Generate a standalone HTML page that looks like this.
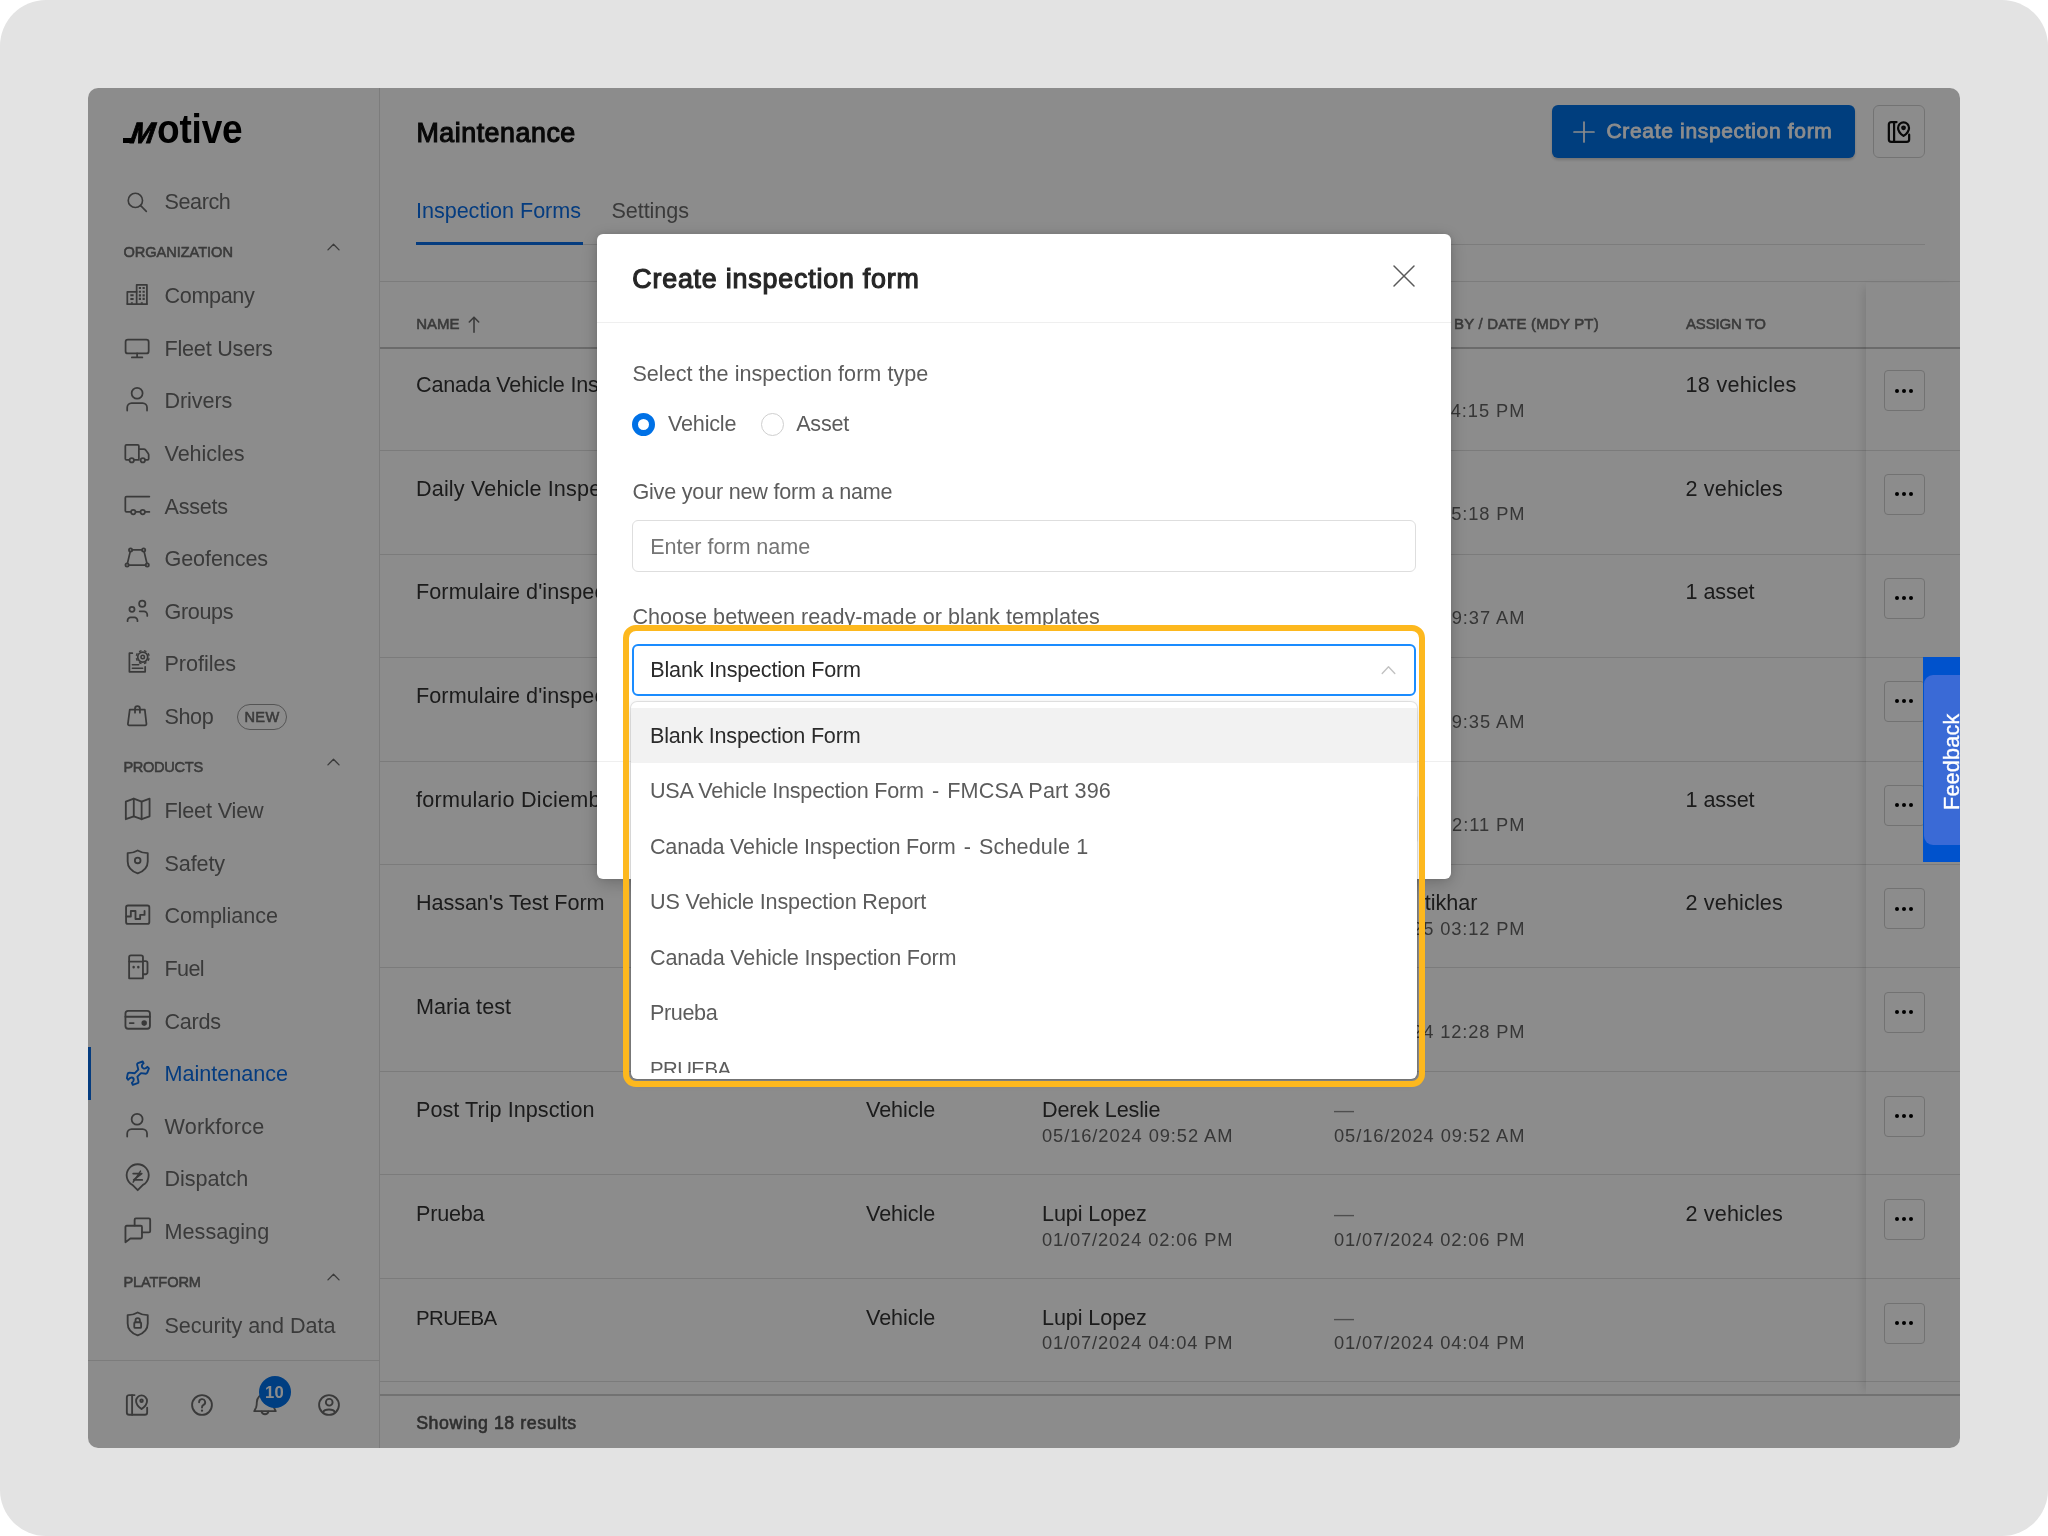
<!DOCTYPE html>
<html lang="en"><head><meta charset="utf-8"><title>Maintenance - Create inspection form</title>
<style>
html,body{margin:0;padding:0;background:#fff;}
body{width:2048px;height:1536px;position:relative;overflow:hidden;font-family:"Liberation Sans",sans-serif;}
.outer{position:absolute;left:0;top:0;width:2048px;height:1536px;background:#e3e3e3;border-radius:46px;}
.app{position:absolute;left:88px;top:88px;width:1872px;height:1360px;border-radius:10px;overflow:hidden;background:#fff;}
.g{position:absolute;left:-88px;top:-88px;width:2048px;height:1536px;will-change:transform;}
.t{position:absolute;line-height:1;white-space:pre;}
.ic{position:absolute;overflow:visible;}
.ln{position:absolute;background:#e6e6e6;}
.box{position:absolute;box-sizing:border-box;}
.dim{position:absolute;left:0;top:0;width:2048px;height:1536px;background:rgba(0,0,0,.45);}
.more{position:absolute;box-sizing:border-box;width:41px;height:41px;border:1.4px solid #cfcfcf;border-radius:4px;background:#fff;}
.more i{position:absolute;top:17.4px;width:4px;height:4px;border-radius:50%;background:#000;}
.opt{position:absolute;left:0;width:786px;height:54.6px;}
</style></head><body>
<div class="outer"></div>
<div class="app"><div class="g">

<div class="ln" style="left:379px;top:88px;width:1.3px;height:1360px;background:#e2e2e2"></div>
<div class="box" style="left:123px;top:138px;width:11px;height:4.6px;background:#000"></div>
<span class="t" style="left:127.5px;top:118.0px;font-size:29.5px;font-weight:700;color:#000;-webkit-text-stroke:0.9px #000;transform:skewX(-19deg) scaleX(0.97);transform-origin:0 84.65%">M</span>
<span class="t" style="left:157.2px;top:109.0px;font-size:40px;font-weight:700;color:#000;letter-spacing:-0.2px;transform:scaleX(0.925);transform-origin:0 84.65%">otive</span>
<svg class="ic" style="left:124.3px;top:188.5px;" width="26" height="26" viewBox="0 0 24 24" fill="none" stroke="#6b6b6b" stroke-width="1.5" stroke-linecap="round" stroke-linejoin="round"><circle cx="10.5" cy="10.5" r="6.600"/><path d="M15.400 15.400L20.600 20.600"/></svg>
<span class="t" style="left:164.5px;top:191px;font-size:21.6px;font-weight:400;color:#6b6b6b;letter-spacing:-0.42px;">Search</span>
<span class="t" style="left:123.4px;top:245px;font-size:14.6px;font-weight:400;color:#6b6b6b;letter-spacing:-0.04px;-webkit-text-stroke:0.55px #6b6b6b;">ORGANIZATION</span>
<svg class="ic" style="left:324.0px;top:238.2px;" width="19" height="19" viewBox="0 0 24 24" fill="none" stroke="#6b6b6b" stroke-width="1.7" stroke-linecap="round" stroke-linejoin="round"><path d="M5 15l7-7 7 7"/></svg>
<svg class="ic" style="left:123.3px;top:280.9px;" width="28" height="28" viewBox="0 0 24 24" fill="none" stroke="#6b6b6b" stroke-width="1.5" stroke-linecap="round" stroke-linejoin="round"><path d="M11.700 19.800V3.300h8.800v16.500"/><path d="M11.700 9.300H3.700v10.500"/><path d="M3.700 19.800h16.800"/><path d="M14.500 6v.01M17.700 6v.01M14.500 9.200v.01M17.700 9.200v.01M14.500 12.300v.01M17.700 12.300v.01M14.500 15.400v.01M17.700 15.400v.01" stroke-width="1.900" stroke-linecap="square"/><path d="M6.300 12.300h2.800M6.300 15.400h2.800" stroke-width="1.700" stroke-linecap="butt"/><path d="M7.600 19.500v-1.300M16.100 19.500v-1.300" stroke-width="1.700" stroke-linecap="butt"/></svg>
<span class="t" style="left:164.5px;top:285px;font-size:21.6px;font-weight:400;color:#6b6b6b;letter-spacing:-0.35px;">Company</span>
<svg class="ic" style="left:123.3px;top:333.5px;" width="28" height="28" viewBox="0 0 24 24" fill="none" stroke="#6b6b6b" stroke-width="1.5" stroke-linecap="round" stroke-linejoin="round"><rect x="2.200" y="4.900" width="19.800" height="11.800" rx="2"/><path d="M12.100 16.700v3.300M7.600 20.100h9"/></svg>
<span class="t" style="left:164.5px;top:338px;font-size:21.6px;font-weight:400;color:#6b6b6b;letter-spacing:-0.22px;">Fleet Users</span>
<svg class="ic" style="left:123.3px;top:386.2px;" width="28" height="28" viewBox="0 0 24 24" fill="none" stroke="#6b6b6b" stroke-width="1.5" stroke-linecap="round" stroke-linejoin="round"><circle cx="12.100" cy="6.200" r="4.700"/><path d="M3.600 21.100V18.400a3.800 3.800 0 0 1 3.800-3.800h9.400a3.800 3.800 0 0 1 3.800 3.800v2.700"/></svg>
<span class="t" style="left:164.5px;top:390px;font-size:21.6px;font-weight:400;color:#6b6b6b;letter-spacing:-0.10px;">Drivers</span>
<svg class="ic" style="left:123.3px;top:438.8px;" width="28" height="28" viewBox="0 0 24 24" fill="none" stroke="#6b6b6b" stroke-width="1.5" stroke-linecap="round" stroke-linejoin="round"><path d="M5.300 17.900H3a1 1 0 0 1-1-1V6a1 1 0 0 1 1-1h9.600a1 1 0 0 1 1 1v11.900H9.700"/><path d="M13.600 8.600h4.200a2 2 0 0 1 1.600.8l2.200 3a2 2 0 0 1 .4 1.200v3.300a1 1 0 0 1-1 1h-1.800"/><circle cx="7.500" cy="18.200" r="1.900"/><circle cx="17" cy="18.200" r="1.900"/></svg>
<span class="t" style="left:164.5px;top:443px;font-size:21.6px;font-weight:400;color:#6b6b6b;letter-spacing:-0.05px;">Vehicles</span>
<svg class="ic" style="left:123.3px;top:491.4px;" width="28" height="28" viewBox="0 0 24 24" fill="none" stroke="#6b6b6b" stroke-width="1.5" stroke-linecap="round" stroke-linejoin="round"><path d="M22.600 4.800H3a1 1 0 0 0-1 1v11.100a1 1 0 0 0 1 1h3.700"/><path d="M10.900 17.900h3.900M19 17.900h3.600"/><circle cx="8.800" cy="18.100" r="1.900"/><circle cx="16.900" cy="18.100" r="1.900"/></svg>
<span class="t" style="left:164.5px;top:496px;font-size:21.6px;font-weight:400;color:#6b6b6b;letter-spacing:-0.27px;">Assets</span>
<svg class="ic" style="left:123.3px;top:544.1px;" width="28" height="28" viewBox="0 0 24 24" fill="none" stroke="#6b6b6b" stroke-width="1.5" stroke-linecap="round" stroke-linejoin="round"><path d="M7.900 5.100h8.400M18.100 6.500l2.400 10.100M19.400 18H4.900M3.800 16.600L6.200 6.500"/><circle cx="6.500" cy="5.100" r="1.400"/><circle cx="17.700" cy="5.100" r="1.400"/><circle cx="20.800" cy="18" r="1.400"/><circle cx="3.500" cy="18" r="1.400"/></svg>
<span class="t" style="left:164.5px;top:548px;font-size:21.6px;font-weight:400;color:#6b6b6b;letter-spacing:-0.10px;">Geofences</span>
<svg class="ic" style="left:123.3px;top:596.7px;" width="28" height="28" viewBox="0 0 24 24" fill="none" stroke="#6b6b6b" stroke-width="1.5" stroke-linecap="round" stroke-linejoin="round"><circle cx="7.700" cy="10.600" r="2.200"/><path d="M3.900 20.700v-.6a2.600 2.600 0 0 1 2.600-2.600h3.300a2.600 2.600 0 0 1 2.600 2.600v.6"/><circle cx="16.500" cy="5.800" r="2.700"/><path d="M14.300 12.300h3.600a2.900 2.900 0 0 1 2.900 2.900v1"/></svg>
<span class="t" style="left:164.5px;top:601px;font-size:21.6px;font-weight:400;color:#6b6b6b;letter-spacing:-0.35px;">Groups</span>
<svg class="ic" style="left:123.3px;top:649.3px;" width="28" height="28" viewBox="0 0 24 24" fill="none" stroke="#6b6b6b" stroke-width="1.5" stroke-linecap="round" stroke-linejoin="round"><path d="M8 3.600H5.500V19.500H19V15.300"/><path d="M8 13.500h5.500M8 16.400h8.900" stroke-width="1.300"/><circle cx="16.900" cy="6.900" r="4.300"/><circle cx="16.900" cy="6.900" r="1.500" stroke-width="1.300"/><path d="M21.43 8.78L22.54 9.23M18.78 11.43L19.23 12.54M15.02 11.43L14.57 12.54M12.37 8.78L11.26 9.23M12.37 5.02L11.26 4.57M15.02 2.37L14.57 1.26M18.78 2.37L19.23 1.26M21.43 5.02L22.54 4.57" stroke-width="2.300" stroke-linecap="butt"/></svg>
<span class="t" style="left:164.5px;top:653px;font-size:21.6px;font-weight:400;color:#6b6b6b;letter-spacing:-0.05px;">Profiles</span>
<svg class="ic" style="left:123.3px;top:701.9px;" width="28" height="28" viewBox="0 0 24 24" fill="none" stroke="#6b6b6b" stroke-width="1.5" stroke-linecap="round" stroke-linejoin="round"><path d="M5.800 6.500h12.900l1.400 12.300a1.100 1.100 0 0 1-1.100 1.200H5.300a1.100 1.100 0 0 1-1.100-1.200z"/><path d="M10.300 9.200V5.600a2.100 2.100 0 0 1 4.200 0v3.600"/></svg>
<span class="t" style="left:164.5px;top:706px;font-size:21.6px;font-weight:400;color:#6b6b6b;letter-spacing:-0.41px;">Shop</span>
<div class="box" style="left:237px;top:703.5px;width:50px;height:26px;border:1.3px solid #9a9a9a;border-radius:13px"></div>
<span class="t" style="left:244.4px;top:710px;font-size:14.6px;font-weight:400;color:#6b6b6b;letter-spacing:0.41px;-webkit-text-stroke:0.55px #6b6b6b;">NEW</span>
<span class="t" style="left:123.4px;top:760px;font-size:14.6px;font-weight:400;color:#6b6b6b;letter-spacing:-0.30px;-webkit-text-stroke:0.55px #6b6b6b;">PRODUCTS</span>
<svg class="ic" style="left:324.0px;top:752.8px;" width="19" height="19" viewBox="0 0 24 24" fill="none" stroke="#6b6b6b" stroke-width="1.7" stroke-linecap="round" stroke-linejoin="round"><path d="M5 15l7-7 7 7"/></svg>
<svg class="ic" style="left:122.8px;top:794.3px;" width="29.4" height="29.4" viewBox="0 0 24 24" fill="none" stroke="#6b6b6b" stroke-width="1.5" stroke-linecap="round" stroke-linejoin="round"><path d="M2.300 6.200L8.800 3.800l6.400 2.400 6.500-2.400v14.400l-6.500 2.400-6.400-2.400-6.500 2.400z"/><path d="M8.800 3.800v14.400M15.200 6.200v14.400"/></svg>
<span class="t" style="left:164.5px;top:800px;font-size:21.6px;font-weight:400;color:#6b6b6b;letter-spacing:-0.14px;">Fleet View</span>
<svg class="ic" style="left:122.8px;top:846.9px;" width="29.4" height="29.4" viewBox="0 0 24 24" fill="none" stroke="#6b6b6b" stroke-width="1.5" stroke-linecap="round" stroke-linejoin="round"><path d="M12 2.800c2.600 1.500 5.400 2.200 8.200 2.200v6.800c0 4.800-3.400 8-8.200 9.800-4.800-1.800-8.200-5-8.200-9.800V5c2.800 0 5.600-.7 8.200-2.200z"/><circle cx="12" cy="11" r="2.300"/></svg>
<span class="t" style="left:164.5px;top:853px;font-size:21.6px;font-weight:400;color:#6b6b6b;letter-spacing:-0.12px;">Safety</span>
<svg class="ic" style="left:122.8px;top:899.6px;" width="29.4" height="29.4" viewBox="0 0 24 24" fill="none" stroke="#6b6b6b" stroke-width="1.5" stroke-linecap="round" stroke-linejoin="round"><rect x="2.500" y="4.500" width="19" height="15" rx="1.600"/><path d="M2.800 13.500h3.600V9h3.800v6.500h3.800v-3.300h3.600V9"/></svg>
<span class="t" style="left:164.5px;top:905px;font-size:21.6px;font-weight:400;color:#6b6b6b;letter-spacing:-0.07px;">Compliance</span>
<svg class="ic" style="left:122.8px;top:952.2px;" width="29.4" height="29.4" viewBox="0 0 24 24" fill="none" stroke="#6b6b6b" stroke-width="1.5" stroke-linecap="round" stroke-linejoin="round"><path d="M5 21.500V4.200a1.500 1.500 0 0 1 1.500-1.500h8.300a1.500 1.500 0 0 1 1.500 1.500v17.300z"/><path d="M5 7.800h11.300"/><path d="M16.300 7.500h2.200a1.500 1.500 0 0 1 1.500 1.500v7.500a1.700 1.700 0 0 1-1.700 1.700h-2"/><path d="M8.700 12.300v.1M12.500 12.300v.1" stroke-width="2"/></svg>
<span class="t" style="left:164.5px;top:958px;font-size:21.6px;font-weight:400;color:#6b6b6b;letter-spacing:-0.65px;">Fuel</span>
<svg class="ic" style="left:122.8px;top:1004.8px;" width="29.4" height="29.4" viewBox="0 0 24 24" fill="none" stroke="#6b6b6b" stroke-width="1.5" stroke-linecap="round" stroke-linejoin="round"><rect x="2" y="4.800" width="20" height="14.600" rx="2.200"/><path d="M2 9.600h20"/><path d="M5.500 14.800h3.200"/><circle cx="17.300" cy="14.800" r="1.500" fill="#6b6b6b"/></svg>
<span class="t" style="left:164.5px;top:1011px;font-size:21.6px;font-weight:400;color:#6b6b6b;letter-spacing:-0.26px;">Cards</span>
<svg class="ic" style="left:125.6px;top:1060.6px;" width="24" height="24.5" viewBox="0 0 24 24.5" fill="none" stroke="#0a6ee8" stroke-width="1.9" stroke-linecap="round" stroke-linejoin="round"><path d="M16.700 0.500L11.900 2.200Q11 2.600 11.100 3.600L12.300 8.600L8.800 12.200L3.200 11.600Q1.900 11.600 1.700 12.800L0.900 17.200L2.200 18.800Q4 16.200 6 16.500Q7.900 17 7.700 19Q7.500 20.600 5.900 21.800L6.800 23.800L11.600 22.200Q12.700 21.800 12.500 20.600L11.400 15.600L15 12.100L20 12.700Q21 12.700 21.300 11.600L22.900 7.300L21.400 5.800Q19.800 8 17.800 7.600Q15.800 7 15.800 5Q15.900 3.400 17.600 2.300Z"/></svg>
<span class="t" style="left:164.5px;top:1063px;font-size:21.6px;font-weight:400;color:#0a6ee8;letter-spacing:-0.02px;">Maintenance</span>
<svg class="ic" style="left:123.3px;top:1111.7px;" width="28" height="28" viewBox="0 0 24 24" fill="none" stroke="#6b6b6b" stroke-width="1.5" stroke-linecap="round" stroke-linejoin="round"><circle cx="12.100" cy="6.200" r="4.700"/><path d="M3.600 21.100V18.400a3.800 3.800 0 0 1 3.800-3.800h9.400a3.800 3.800 0 0 1 3.800 3.800v2.700"/></svg>
<span class="t" style="left:164.5px;top:1116px;font-size:21.6px;font-weight:400;color:#6b6b6b;letter-spacing:0.22px;">Workforce</span>
<svg class="ic" style="left:122.8px;top:1162.7px;" width="29.4" height="29.4" viewBox="0 0 24 24" fill="none" stroke="#6b6b6b" stroke-width="1.5" stroke-linecap="round" stroke-linejoin="round"><path d="M12 22.200l-4.300-4.300a9 9 0 1 1 8.600 0z"/><path d="M8.300 8.600h7l-6.600 5.200h7" stroke-width="1.400"/><path d="M14.300 6.600l-6 9" stroke-width="1.200"/></svg>
<span class="t" style="left:164.5px;top:1168px;font-size:21.6px;font-weight:400;color:#6b6b6b;letter-spacing:-0.03px;">Dispatch</span>
<svg class="ic" style="left:122.8px;top:1215.3px;" width="29.4" height="29.4" viewBox="0 0 24 24" fill="none" stroke="#6b6b6b" stroke-width="1.5" stroke-linecap="round" stroke-linejoin="round"><path d="M9.500 8.500V3.800a1 1 0 0 1 1-1h10.700a1 1 0 0 1 1 1v9.400a1 1 0 0 1-1 1h-5.700"/><path d="M2 9.800a1 1 0 0 1 1-1h11.500a1 1 0 0 1 1 1v8.400a1 1 0 0 1-1 1H6l-4 3z"/></svg>
<span class="t" style="left:164.5px;top:1221px;font-size:21.6px;font-weight:400;color:#6b6b6b;letter-spacing:0.03px;">Messaging</span>
<div class="box" style="left:88px;top:1047px;width:2.6px;height:52.6px;background:#0a6ee8"></div>
<span class="t" style="left:123.4px;top:1275px;font-size:14.6px;font-weight:400;color:#6b6b6b;letter-spacing:-0.11px;-webkit-text-stroke:0.55px #6b6b6b;">PLATFORM</span>
<svg class="ic" style="left:324.0px;top:1268.2px;" width="19" height="19" viewBox="0 0 24 24" fill="none" stroke="#6b6b6b" stroke-width="1.7" stroke-linecap="round" stroke-linejoin="round"><path d="M5 15l7-7 7 7"/></svg>
<svg class="ic" style="left:122.8px;top:1309.3px;" width="29.4" height="29.4" viewBox="0 0 24 24" fill="none" stroke="#6b6b6b" stroke-width="1.5" stroke-linecap="round" stroke-linejoin="round"><path d="M12 2.800c2.600 1.500 5.400 2.200 8.200 2.200v6.800c0 4.800-3.400 8-8.200 9.800-4.800-1.800-8.200-5-8.200-9.800V5c2.800 0 5.600-.7 8.200-2.200z"/><rect x="9.200" y="10.800" width="5.600" height="4.600" rx=".8"/><path d="M10.200 10.800V9.300a1.800 1.800 0 0 1 3.600 0v1.500"/></svg>
<span class="t" style="left:164.5px;top:1315px;font-size:21.6px;font-weight:400;color:#6b6b6b;letter-spacing:-0.04px;">Security and Data</span>
<div class="ln" style="left:88px;top:1359.6px;width:291px;height:1.4px;background:#e2e2e2"></div>
<svg class="ic" style="left:123.3px;top:1390.5px;" width="28" height="28" viewBox="0 0 24 24" fill="none" stroke="#6b6b6b" stroke-width="1.6" stroke-linecap="round" stroke-linejoin="round"><path d="M9.900 3.500H5.300a2 2 0 0 0-2 2v12.900a2 2 0 0 0 2 2h13.400a2 2 0 0 0 2-2v-4.100"/><path d="M7.800 3.500v16.900"/><path d="M15.900 15.400s-4.700-3.300-4.700-6.900a4.700 4.700 0 0 1 9.400 0c0 3.600-4.700 6.900-4.700 6.900z"/><circle cx="15.900" cy="8.400" r="1.100"/></svg>
<svg class="ic" style="left:187.9px;top:1390.5px;" width="28" height="28" viewBox="0 0 24 24" fill="none" stroke="#6b6b6b" stroke-width="1.6" stroke-linecap="round" stroke-linejoin="round"><circle cx="12" cy="12" r="8.500"/><path d="M9.500 9.600a2.600 2.600 0 1 1 3.800 2.300c-.9.500-1.300 1-1.300 2v.3"/><path d="M12 16.800v.1" stroke-width="1.900"/></svg>
<svg class="ic" style="left:251.4px;top:1390.5px;" width="28" height="28" viewBox="0 0 24 24" fill="none" stroke="#6b6b6b" stroke-width="1.6" stroke-linecap="round" stroke-linejoin="round"><path d="M2.800 17.300L4.400 14C4.900 12.600 5 11 5 9.500a7 7 0 0 1 14 0C19 11 19.100 12.600 19.600 14L21.200 17.300Z"/><path d="M9 17.600a3.100 3.100 0 0 0 6 0"/></svg>
<svg class="ic" style="left:315.0px;top:1390.5px;" width="28" height="28" viewBox="0 0 24 24" fill="none" stroke="#6b6b6b" stroke-width="1.6" stroke-linecap="round" stroke-linejoin="round"><circle cx="12" cy="12" r="8.500"/><circle cx="12.200" cy="9.600" r="2.900"/><path d="M6.800 18.300c.8-1.600 2.600-2.400 5.200-2.400s4.400.8 5.200 2.400"/></svg>
<div class="box" style="left:258.5px;top:1375.6px;width:32.6px;height:32.6px;border-radius:50%;background:#0072ec"></div>
<span class="t" style="left:265.0px;top:1385px;font-size:16.6px;font-weight:700;color:#fff;letter-spacing:0.3px;">10</span>
<span class="t" style="left:416.4px;top:120px;font-size:26.8px;font-weight:400;color:#111;letter-spacing:0.54px;-webkit-text-stroke:1.15px #111;">Maintenance</span>
<div class="box" style="left:1552px;top:105px;width:303px;height:52.5px;border-radius:6px;background:#0071e6;box-shadow:0 2px 3px rgba(0,0,0,.18)"></div>
<svg class="ic" style="left:1572.5px;top:120.5px;" width="22" height="22" viewBox="0 0 22 22" fill="none" stroke="#fff" stroke-width="1.7" stroke-linecap="round" stroke-linejoin="round"><path d="M11 1v20M1 11h20"/></svg>
<span class="t" style="left:1606.5px;top:120px;font-size:21px;font-weight:400;color:#fff;letter-spacing:0.67px;-webkit-text-stroke:0.8px #fff;">Create inspection form</span>
<div class="box" style="left:1872.5px;top:105px;width:52.5px;height:52.5px;border-radius:6px;border:1.4px solid #d2d2d2;background:#fff"></div>
<svg class="ic" style="left:1884.7px;top:118.3px;" width="28" height="28" viewBox="0 0 24 24" fill="none" stroke="#111" stroke-width="1.9" stroke-linecap="round" stroke-linejoin="round"><path d="M9.900 3.500H5.300a2 2 0 0 0-2 2v12.900a2 2 0 0 0 2 2h13.400a2 2 0 0 0 2-2v-4.100"/><path d="M7.800 3.500v16.900"/><path d="M15.900 15.400s-4.700-3.300-4.700-6.900a4.700 4.700 0 0 1 9.400 0c0 3.600-4.700 6.900-4.700 6.900z"/><circle cx="15.900" cy="8.400" r="1.100"/></svg>
<span class="t" style="left:416.0px;top:200px;font-size:21.6px;font-weight:400;color:#0a6ee8;letter-spacing:-0.04px;">Inspection Forms</span>
<span class="t" style="left:611.4px;top:200px;font-size:21.6px;font-weight:400;color:#6b6b6b;letter-spacing:-0.05px;">Settings</span>
<div class="ln" style="left:416px;top:244px;width:1509px;height:1.4px;background:#e2e2e2"></div>
<div class="ln" style="left:416px;top:241.8px;width:166.6px;height:3.2px;background:#0a6ee8"></div>
<div class="ln" style="left:380px;top:281.2px;width:1580px;height:1.3px;background:#e2e2e2"></div>
<div class="ln" style="left:380px;top:346.5px;width:1580px;height:2px;background:#c4c4c4"></div>
<span class="t" style="left:416.2px;top:316px;font-size:15.0px;font-weight:400;color:#6b6b6b;letter-spacing:-0.01px;-webkit-text-stroke:0.55px #6b6b6b;">NAME</span>
<svg class="ic" style="left:468.1px;top:315.8px;" width="12" height="17" viewBox="0 0 12 17" fill="none" stroke="#6b6b6b" stroke-width="1.6" stroke-linecap="round" stroke-linejoin="round"><path d="M6 16.200V1.400M1.300 6L6 1.200l4.700 4.800"/></svg>
<span class="t" style="left:866.0px;top:316px;font-size:15.0px;font-weight:400;color:#6b6b6b;letter-spacing:0.1px;-webkit-text-stroke:0.55px #6b6b6b;">TYPE</span>
<span class="t" style="left:1042.0px;top:316px;font-size:15.0px;font-weight:400;color:#6b6b6b;letter-spacing:0.17px;-webkit-text-stroke:0.55px #6b6b6b;">CREATED BY / DATE (MDY PT)</span>
<span class="t" style="top:316px;font-size:15.0px;font-weight:400;color:#6b6b6b;letter-spacing:0.17px;right:449.2px;-webkit-text-stroke:0.55px #6b6b6b;">LAST UPDATED BY / DATE (MDY PT)</span>
<span class="t" style="left:1686.0px;top:316px;font-size:15.0px;font-weight:400;color:#6b6b6b;letter-spacing:-0.15px;-webkit-text-stroke:0.55px #6b6b6b;">ASSIGN TO</span>
<span class="t" style="left:416.0px;top:374px;font-size:21.6px;font-weight:400;color:#333;letter-spacing:-0.19px;">Canada Vehicle Inspection Form</span>
<span class="t" style="left:866.0px;top:374px;font-size:21.6px;font-weight:400;color:#333;letter-spacing:-0.06px;">Vehicle</span>
<span class="t" style="left:1042.0px;top:374px;font-size:21.6px;font-weight:400;color:#333;letter-spacing:-0.04px;">Hassan Iftikhar</span>
<span class="t" style="left:1042.0px;top:402px;font-size:18.3px;font-weight:400;color:#636363;letter-spacing:0.94px;">03/11/2025 04:15 PM</span>
<span class="t" style="left:1334.0px;top:375px;font-size:20px;font-weight:400;color:#8f8f8f;">—</span>
<span class="t" style="left:1334.0px;top:402px;font-size:18.3px;font-weight:400;color:#636363;letter-spacing:0.94px;">03/11/2025 04:15 PM</span>
<span class="t" style="left:1685.6px;top:374px;font-size:21.6px;font-weight:400;color:#333;letter-spacing:0.27px;">18 vehicles</span>
<div class="ln" style="left:380px;top:450px;width:1580px;height:1px;background:#e0e0e0"></div>
<span class="t" style="left:416.0px;top:478px;font-size:21.6px;font-weight:400;color:#333;letter-spacing:0.15px;">Daily Vehicle Inspection</span>
<span class="t" style="left:866.0px;top:478px;font-size:21.6px;font-weight:400;color:#333;letter-spacing:-0.06px;">Vehicle</span>
<span class="t" style="left:1042.0px;top:478px;font-size:21.6px;font-weight:400;color:#333;letter-spacing:-0.04px;">Hassan Iftikhar</span>
<span class="t" style="left:1042.0px;top:505px;font-size:18.3px;font-weight:400;color:#636363;letter-spacing:0.87px;">02/24/2025 05:18 PM</span>
<span class="t" style="left:1334.0px;top:479px;font-size:20px;font-weight:400;color:#8f8f8f;">—</span>
<span class="t" style="left:1334.0px;top:505px;font-size:18.3px;font-weight:400;color:#636363;letter-spacing:0.87px;">02/24/2025 05:18 PM</span>
<span class="t" style="left:1685.6px;top:478px;font-size:21.6px;font-weight:400;color:#333;letter-spacing:0.13px;">2 vehicles</span>
<div class="ln" style="left:380px;top:554px;width:1580px;height:1px;background:#e0e0e0"></div>
<span class="t" style="left:416.0px;top:581px;font-size:21.6px;font-weight:400;color:#333;letter-spacing:0.08px;">Formulaire d&#x27;inspection</span>
<span class="t" style="left:866.0px;top:581px;font-size:21.6px;font-weight:400;color:#333;letter-spacing:-0.1px;">Asset</span>
<span class="t" style="left:1042.0px;top:581px;font-size:21.6px;font-weight:400;color:#333;letter-spacing:-0.10px;">Lupi Lopez</span>
<span class="t" style="left:1042.0px;top:609px;font-size:18.3px;font-weight:400;color:#636363;letter-spacing:0.92px;">01/08/2024 09:37 AM</span>
<span class="t" style="left:1334.0px;top:582px;font-size:20px;font-weight:400;color:#8f8f8f;">—</span>
<span class="t" style="left:1334.0px;top:609px;font-size:18.3px;font-weight:400;color:#636363;letter-spacing:0.92px;">01/08/2024 09:37 AM</span>
<span class="t" style="left:1685.6px;top:581px;font-size:21.6px;font-weight:400;color:#333;letter-spacing:-0.1px;">1 asset</span>
<div class="ln" style="left:380px;top:657px;width:1580px;height:1px;background:#e0e0e0"></div>
<span class="t" style="left:416.0px;top:685px;font-size:21.6px;font-weight:400;color:#333;letter-spacing:0.08px;">Formulaire d&#x27;inspection</span>
<span class="t" style="left:866.0px;top:685px;font-size:21.6px;font-weight:400;color:#333;letter-spacing:-0.06px;">Vehicle</span>
<span class="t" style="left:1042.0px;top:685px;font-size:21.6px;font-weight:400;color:#333;letter-spacing:-0.10px;">Lupi Lopez</span>
<span class="t" style="left:1042.0px;top:713px;font-size:18.3px;font-weight:400;color:#636363;letter-spacing:0.92px;">01/08/2024 09:35 AM</span>
<span class="t" style="left:1334.0px;top:686px;font-size:20px;font-weight:400;color:#8f8f8f;">—</span>
<span class="t" style="left:1334.0px;top:713px;font-size:18.3px;font-weight:400;color:#636363;letter-spacing:0.92px;">01/08/2024 09:35 AM</span>
<div class="ln" style="left:380px;top:761px;width:1580px;height:1px;background:#e0e0e0"></div>
<span class="t" style="left:416.0px;top:789px;font-size:21.6px;font-weight:400;color:#333;letter-spacing:0.27px;">formulario Diciembre</span>
<span class="t" style="left:866.0px;top:789px;font-size:21.6px;font-weight:400;color:#333;letter-spacing:-0.1px;">Asset</span>
<span class="t" style="left:1042.0px;top:789px;font-size:21.6px;font-weight:400;color:#333;letter-spacing:-0.10px;">Lupi Lopez</span>
<span class="t" style="left:1042.0px;top:816px;font-size:18.3px;font-weight:400;color:#636363;letter-spacing:0.94px;">12/14/2023 02:11 PM</span>
<span class="t" style="left:1334.0px;top:790px;font-size:20px;font-weight:400;color:#8f8f8f;">—</span>
<span class="t" style="left:1334.0px;top:816px;font-size:18.3px;font-weight:400;color:#636363;letter-spacing:0.94px;">12/14/2023 02:11 PM</span>
<span class="t" style="left:1685.6px;top:789px;font-size:21.6px;font-weight:400;color:#333;letter-spacing:-0.1px;">1 asset</span>
<div class="ln" style="left:380px;top:864px;width:1580px;height:1px;background:#e0e0e0"></div>
<span class="t" style="left:416.0px;top:892px;font-size:21.6px;font-weight:400;color:#333;letter-spacing:-0.07px;">Hassan&#x27;s Test Form</span>
<span class="t" style="left:866.0px;top:892px;font-size:21.6px;font-weight:400;color:#333;letter-spacing:-0.06px;">Vehicle</span>
<span class="t" style="left:1042.0px;top:892px;font-size:21.6px;font-weight:400;color:#333;letter-spacing:-0.04px;">Hassan Iftikhar</span>
<span class="t" style="left:1042.0px;top:920px;font-size:18.3px;font-weight:400;color:#636363;letter-spacing:0.87px;">02/10/2025 03:12 PM</span>
<span class="t" style="left:1334.0px;top:892px;font-size:21.6px;font-weight:400;color:#333;letter-spacing:-0.04px;">Hassan Iftikhar</span>
<span class="t" style="left:1334.0px;top:920px;font-size:18.3px;font-weight:400;color:#636363;letter-spacing:0.87px;">02/10/2025 03:12 PM</span>
<span class="t" style="left:1685.6px;top:892px;font-size:21.6px;font-weight:400;color:#333;letter-spacing:0.13px;">2 vehicles</span>
<div class="ln" style="left:380px;top:967px;width:1580px;height:1px;background:#e0e0e0"></div>
<span class="t" style="left:416.0px;top:996px;font-size:21.6px;font-weight:400;color:#333;letter-spacing:0.02px;">Maria test</span>
<span class="t" style="left:866.0px;top:996px;font-size:21.6px;font-weight:400;color:#333;letter-spacing:-0.06px;">Vehicle</span>
<span class="t" style="left:1042.0px;top:996px;font-size:21.6px;font-weight:400;color:#333;letter-spacing:-0.1px;">Maria Gomez</span>
<span class="t" style="left:1042.0px;top:1023px;font-size:18.3px;font-weight:400;color:#636363;letter-spacing:0.87px;">04/02/2024 12:28 PM</span>
<span class="t" style="left:1334.0px;top:997px;font-size:20px;font-weight:400;color:#8f8f8f;">—</span>
<span class="t" style="left:1334.0px;top:1023px;font-size:18.3px;font-weight:400;color:#636363;letter-spacing:0.87px;">04/02/2024 12:28 PM</span>
<div class="ln" style="left:380px;top:1071px;width:1580px;height:1px;background:#e0e0e0"></div>
<span class="t" style="left:416.0px;top:1099px;font-size:21.6px;font-weight:400;color:#333;letter-spacing:0.05px;">Post Trip Inpsction</span>
<span class="t" style="left:866.0px;top:1099px;font-size:21.6px;font-weight:400;color:#333;letter-spacing:-0.06px;">Vehicle</span>
<span class="t" style="left:1042.0px;top:1099px;font-size:21.6px;font-weight:400;color:#333;letter-spacing:-0.14px;">Derek Leslie</span>
<span class="t" style="left:1042.0px;top:1127px;font-size:18.3px;font-weight:400;color:#636363;letter-spacing:0.92px;">05/16/2024 09:52 AM</span>
<span class="t" style="left:1334.0px;top:1100px;font-size:20px;font-weight:400;color:#8f8f8f;">—</span>
<span class="t" style="left:1334.0px;top:1127px;font-size:18.3px;font-weight:400;color:#636363;letter-spacing:0.92px;">05/16/2024 09:52 AM</span>
<div class="ln" style="left:380px;top:1174px;width:1580px;height:1px;background:#e0e0e0"></div>
<span class="t" style="left:416.0px;top:1203px;font-size:21.6px;font-weight:400;color:#333;letter-spacing:-0.22px;">Prueba</span>
<span class="t" style="left:866.0px;top:1203px;font-size:21.6px;font-weight:400;color:#333;letter-spacing:-0.06px;">Vehicle</span>
<span class="t" style="left:1042.0px;top:1203px;font-size:21.6px;font-weight:400;color:#333;letter-spacing:-0.10px;">Lupi Lopez</span>
<span class="t" style="left:1042.0px;top:1231px;font-size:18.3px;font-weight:400;color:#636363;letter-spacing:0.87px;">01/07/2024 02:06 PM</span>
<span class="t" style="left:1334.0px;top:1204px;font-size:20px;font-weight:400;color:#8f8f8f;">—</span>
<span class="t" style="left:1334.0px;top:1231px;font-size:18.3px;font-weight:400;color:#636363;letter-spacing:0.87px;">01/07/2024 02:06 PM</span>
<span class="t" style="left:1685.6px;top:1203px;font-size:21.6px;font-weight:400;color:#333;letter-spacing:0.13px;">2 vehicles</span>
<div class="ln" style="left:380px;top:1278px;width:1580px;height:1px;background:#e0e0e0"></div>
<span class="t" style="left:416.0px;top:1308px;font-size:20.4px;font-weight:400;color:#333;letter-spacing:-0.56px;">PRUEBA</span>
<span class="t" style="left:866.0px;top:1307px;font-size:21.6px;font-weight:400;color:#333;letter-spacing:-0.06px;">Vehicle</span>
<span class="t" style="left:1042.0px;top:1307px;font-size:21.6px;font-weight:400;color:#333;letter-spacing:-0.10px;">Lupi Lopez</span>
<span class="t" style="left:1042.0px;top:1334px;font-size:18.3px;font-weight:400;color:#636363;letter-spacing:0.87px;">01/07/2024 04:04 PM</span>
<span class="t" style="left:1334.0px;top:1308px;font-size:20px;font-weight:400;color:#8f8f8f;">—</span>
<span class="t" style="left:1334.0px;top:1334px;font-size:18.3px;font-weight:400;color:#636363;letter-spacing:0.87px;">01/07/2024 04:04 PM</span>
<div class="ln" style="left:380px;top:1381px;width:1580px;height:1px;background:#e0e0e0"></div>
<div class="box" style="left:1866px;top:282.5px;width:94px;height:1112px;background:#fff;box-shadow:-6px 0 10px -4px rgba(0,0,0,.13)"></div>
<div class="ln" style="left:1866px;top:346.5px;width:94px;height:2px;background:#c4c4c4"></div>
<div class="ln" style="left:1866px;top:450px;width:94px;height:1px;background:#e0e0e0"></div>
<div class="more" style="left:1884.2px;top:370.3px"><i style="left:10.2px"></i><i style="left:17.2px"></i><i style="left:24.2px"></i></div>
<div class="ln" style="left:1866px;top:554px;width:94px;height:1px;background:#e0e0e0"></div>
<div class="more" style="left:1884.2px;top:473.9px"><i style="left:10.2px"></i><i style="left:17.2px"></i><i style="left:24.2px"></i></div>
<div class="ln" style="left:1866px;top:657px;width:94px;height:1px;background:#e0e0e0"></div>
<div class="more" style="left:1884.2px;top:577.5px"><i style="left:10.2px"></i><i style="left:17.2px"></i><i style="left:24.2px"></i></div>
<div class="ln" style="left:1866px;top:761px;width:94px;height:1px;background:#e0e0e0"></div>
<div class="more" style="left:1884.2px;top:681.1px"><i style="left:10.2px"></i><i style="left:17.2px"></i><i style="left:24.2px"></i></div>
<div class="ln" style="left:1866px;top:864px;width:94px;height:1px;background:#e0e0e0"></div>
<div class="more" style="left:1884.2px;top:784.7px"><i style="left:10.2px"></i><i style="left:17.2px"></i><i style="left:24.2px"></i></div>
<div class="ln" style="left:1866px;top:967px;width:94px;height:1px;background:#e0e0e0"></div>
<div class="more" style="left:1884.2px;top:888.3px"><i style="left:10.2px"></i><i style="left:17.2px"></i><i style="left:24.2px"></i></div>
<div class="ln" style="left:1866px;top:1071px;width:94px;height:1px;background:#e0e0e0"></div>
<div class="more" style="left:1884.2px;top:991.9px"><i style="left:10.2px"></i><i style="left:17.2px"></i><i style="left:24.2px"></i></div>
<div class="ln" style="left:1866px;top:1174px;width:94px;height:1px;background:#e0e0e0"></div>
<div class="more" style="left:1884.2px;top:1095.5px"><i style="left:10.2px"></i><i style="left:17.2px"></i><i style="left:24.2px"></i></div>
<div class="ln" style="left:1866px;top:1278px;width:94px;height:1px;background:#e0e0e0"></div>
<div class="more" style="left:1884.2px;top:1199.1px"><i style="left:10.2px"></i><i style="left:17.2px"></i><i style="left:24.2px"></i></div>
<div class="ln" style="left:1866px;top:1381px;width:94px;height:1px;background:#e0e0e0"></div>
<div class="more" style="left:1884.2px;top:1302.7px"><i style="left:10.2px"></i><i style="left:17.2px"></i><i style="left:24.2px"></i></div>
<div class="box" style="left:380px;top:1394.4px;width:1580px;height:54px;background:#fff"></div>
<div class="ln" style="left:380px;top:1394.4px;width:1580px;height:1.6px;background:#cfcfcf"></div>
<span class="t" style="left:416.2px;top:1415px;font-size:17.8px;font-weight:400;color:#555;letter-spacing:0.57px;-webkit-text-stroke:0.6px #555;">Showing 18 results</span>
<div class="dim"></div>
<div class="box" style="left:597px;top:233.5px;width:854px;height:645px;background:#fff;border-radius:6px;box-shadow:0 4px 18px rgba(0,0,0,.22),0 0 6px rgba(0,0,0,.10)"></div>
<span class="t" style="left:632.3px;top:266px;font-size:26.8px;font-weight:400;color:#262626;letter-spacing:0.81px;-webkit-text-stroke:1.15px #262626;">Create inspection form</span>
<svg class="ic" style="left:1392.5px;top:265.0px;" width="22" height="22" viewBox="0 0 22 22" fill="none" stroke="#595959" stroke-width="1.5" stroke-linecap="round" stroke-linejoin="round"><path d="M1 1l20 20M21 1L1 21"/></svg>
<div class="ln" style="left:597px;top:321.5px;width:854px;height:1.3px;background:#efefef"></div>
<span class="t" style="left:632.4px;top:363px;font-size:21.6px;font-weight:400;color:#5c5c5c;letter-spacing:0.02px;">Select the inspection form type</span>
<div class="box" style="left:632px;top:413px;width:23.4px;height:23.4px;border-radius:50%;border:6px solid #0071e6;background:#fff"></div>
<span class="t" style="left:668.0px;top:413px;font-size:21.6px;font-weight:400;color:#5c5c5c;letter-spacing:-0.19px;">Vehicle</span>
<div class="box" style="left:761px;top:413px;width:23.4px;height:23.4px;border-radius:50%;border:1.4px solid #cfcfcf;background:#fff"></div>
<span class="t" style="left:796.2px;top:413px;font-size:21.6px;font-weight:400;color:#5c5c5c;letter-spacing:-0.24px;">Asset</span>
<span class="t" style="left:632.4px;top:481px;font-size:21.6px;font-weight:400;color:#5c5c5c;letter-spacing:-0.21px;">Give your new form a name</span>
<div class="box" style="left:632px;top:519.8px;width:784px;height:52.2px;border-radius:6px;border:1.4px solid #dedede;background:#fff"></div>
<span class="t" style="left:650.2px;top:536px;font-size:21.6px;font-weight:400;color:#757575;letter-spacing:-0.06px;">Enter form name</span>
<span class="t" style="left:632.4px;top:606px;font-size:21.6px;font-weight:400;color:#5c5c5c;letter-spacing:0.04px;">Choose between ready-made or blank templates</span>
<div class="ln" style="left:597px;top:761px;width:854px;height:1.3px;background:#efefef"></div>
<div class="box" style="left:1301.500px;top:793px;width:116px;height:52px;border-radius:6px;background:#ececec"></div>
<span class="t" style="left:1332.0px;top:808px;font-size:21px;font-weight:700;color:#b5b5b5;">Create</span>
<div class="box" style="left:1170px;top:793px;width:112px;height:52px;border-radius:6px;border:1.4px solid #d2d2d2;background:#fff"></div>
<span class="t" style="left:1194.0px;top:808px;font-size:21px;font-weight:700;color:#333;">Cancel</span>
<div class="box" style="left:631.6px;top:644px;width:784.8px;height:52.2px;border-radius:6px;border:2.2px solid #1a8cff;background:#fff"></div>
<span class="t" style="left:650.3px;top:659px;font-size:21.6px;font-weight:400;color:#2b2b2b;letter-spacing:-0.21px;">Blank Inspection Form</span>
<svg class="ic" style="left:1380.5px;top:664.5px;" width="15" height="10" viewBox="0 0 15 10" fill="none" stroke="#c2c2c2" stroke-width="1.4" stroke-linecap="round" stroke-linejoin="round"><path d="M1.200 8.500L7.500 1.800l6.300 6.700"/></svg>
<div class="box" style="left:631px;top:702px;width:785.6px;height:377px;border-radius:6px;background:#fff;overflow:hidden;box-shadow:0 0 0 1px rgba(0,0,0,.09),0 3px 12px rgba(0,0,0,.16)">
<div class="box" style="left:0;top:0;width:786px;height:371.4px;overflow:hidden">
<div class="opt" style="top:6px;background:#f2f2f2"></div>
<span class="t" style="left:19.0px;top:23px;font-size:21.6px;font-weight:400;color:#2b2b2b;letter-spacing:-0.21px;">Blank Inspection Form</span>
<span class="t" style="left:19.0px;top:78px;font-size:21.6px;font-weight:400;color:#5c5c5c;letter-spacing:-0.22px;">USA Vehicle Inspection Form<span style="margin:0 2.5px"> - </span><span style="letter-spacing:0.12px">FMCSA Part 396</span></span>
<span class="t" style="left:19.0px;top:134px;font-size:21.6px;font-weight:400;color:#5c5c5c;letter-spacing:-0.22px;">Canada Vehicle Inspection Form<span style="margin:0 2.5px"> - </span><span style="letter-spacing:0.12px">Schedule 1</span></span>
<span class="t" style="left:19.0px;top:189px;font-size:21.6px;font-weight:400;color:#5c5c5c;letter-spacing:-0.17px;">US Vehicle Inspection Report</span>
<span class="t" style="left:19.0px;top:245px;font-size:21.6px;font-weight:400;color:#5c5c5c;letter-spacing:-0.19px;">Canada Vehicle Inspection Form</span>
<span class="t" style="left:19.0px;top:300px;font-size:21.6px;font-weight:400;color:#5c5c5c;letter-spacing:-0.39px;">Prueba</span>
<span class="t" style="left:19.0px;top:357px;font-size:20.4px;font-weight:400;color:#5c5c5c;letter-spacing:-0.56px;">PRUEBA</span>
</div></div>
<div class="box" style="left:623.2px;top:625px;width:802px;height:462px;border:6.2px solid #fdb81e;border-radius:13px"></div>
<div class="box" style="left:1923px;top:657px;width:37px;height:205px;background:#0052cc;overflow:hidden"><div class="box" style="left:1px;top:18px;width:60px;height:170px;border-radius:9px;background:#3a6ad6"></div><span class="t" style="left:18.6px;top:152.6px;font-size:21.5px;color:#fff;-webkit-text-stroke:0.35px #fff;transform:rotate(-90deg);transform-origin:0 0;letter-spacing:0.25px">Feedback</span></div>
</div></div>
</body></html>
